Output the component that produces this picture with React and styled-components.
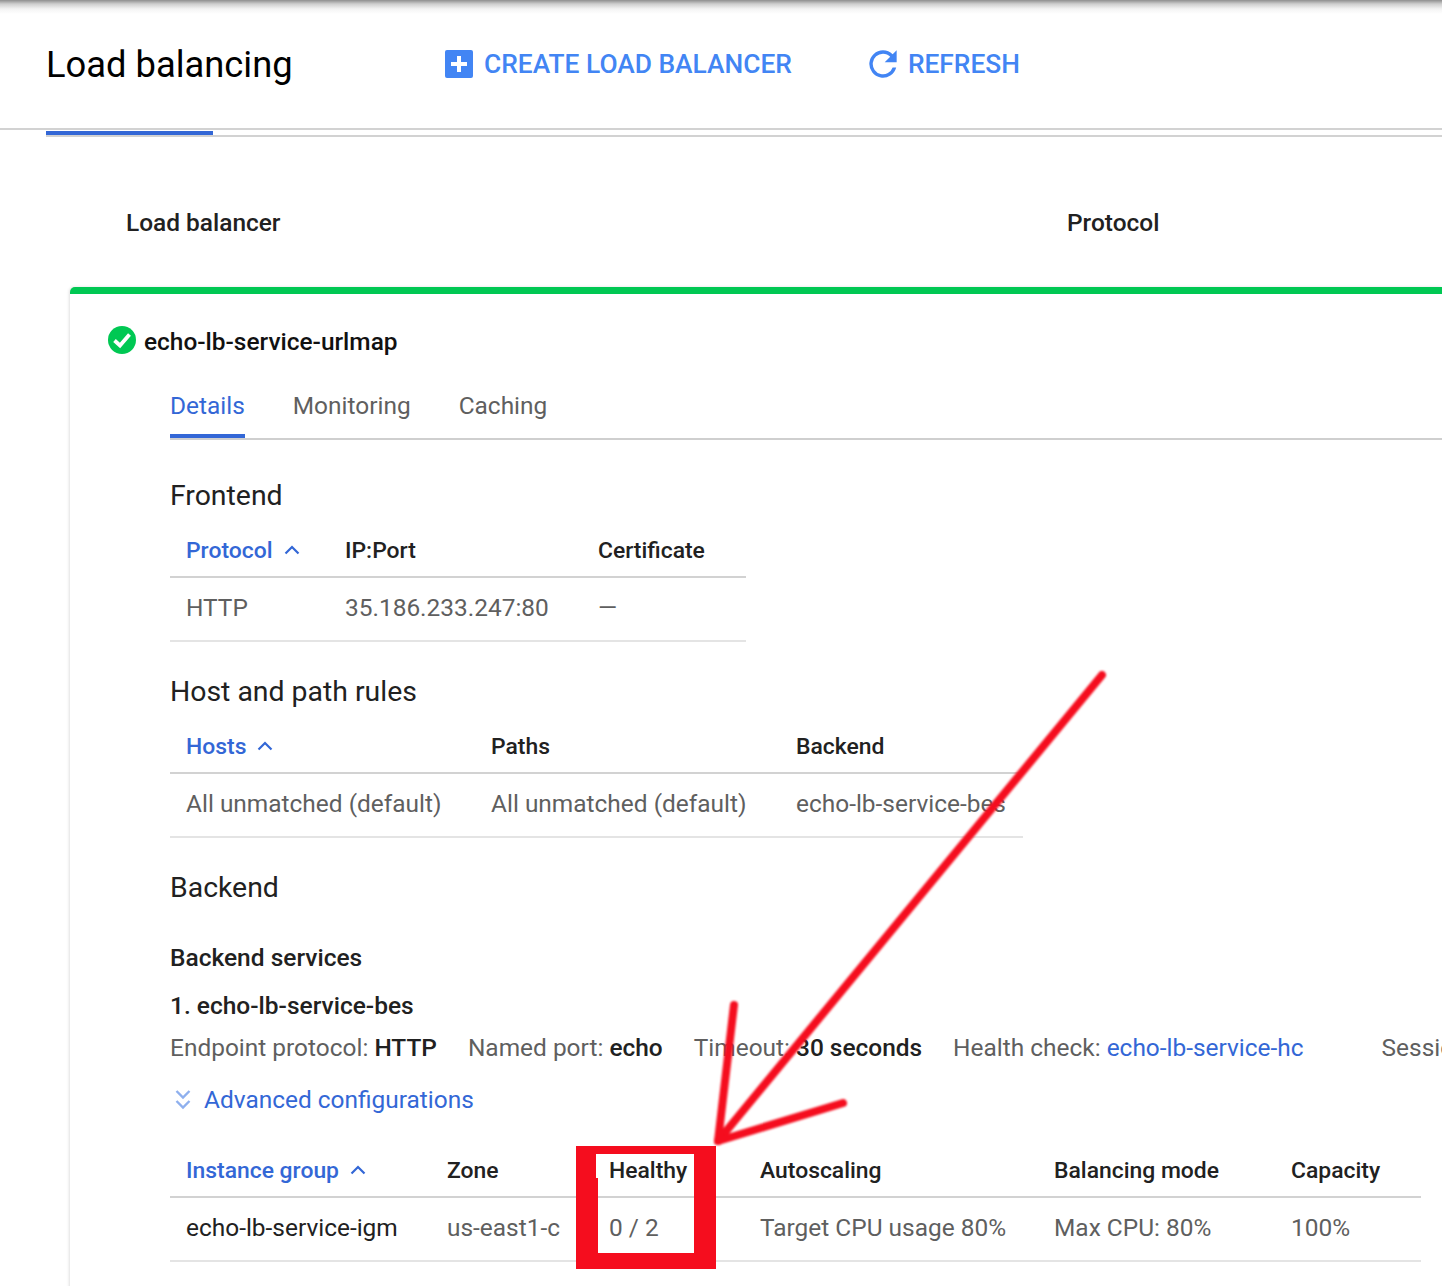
import styled, { createGlobalStyle } from "styled-components";

const GlobalStyle = createGlobalStyle`
  html, body {
    margin: 0;
    padding: 0;
    background: #fff;
    font-family: Roboto, "Liberation Sans", sans-serif;
  }
`;

const BLUE = "#3367d6";

const frontendCols = "159px 253px 1fr";
const hostsCols = "305px 305px 1fr";
const instanceCols = "261px 162px 151px 294px 237px 1fr";

const App = () => {
  return (
    <Page>
      <GlobalStyle />
      <TopShadow />
      <Header>
        <PageTitle>Load balancing</PageTitle>
        <Action $left="152px">
          <svg width="28" height="28" viewBox="0 0 28 28">
            <rect width="28" height="28" rx="2" fill="#4285f4" />
            <path d="M12 6h4v6h6v4h-6v6h-4v-6H6v-4h6z" fill="#fff" />
          </svg>
          CREATE LOAD BALANCER
        </Action>
        <Action $left="77px">
          <svg width="28" height="30" viewBox="3.800 3.700 16.400 16.600">
            <path
              d="M17.650 6.350A7.960 7.960 0 0 0 12 4a8 8 0 1 0 7.730 10h-2.080A6 6 0 1 1 12 6c1.660 0 3.140.690 4.220 1.780L13 11h7V4z"
              fill="#4285f4"
            />
          </svg>
          REFRESH
        </Action>
      </Header>
      <TabStrip>
        <ActiveStrip />
      </TabStrip>
      <ColumnHeads>
        <ColumnHead $width="941px">Load balancer</ColumnHead>
        <ColumnHead>Protocol</ColumnHead>
      </ColumnHeads>
      <Card>
        <CardTitle>
          <svg width="28" height="28" viewBox="0 0 28 28">
            <circle cx="14" cy="14" r="14" fill="#00c853" />
            <path d="M6.500 14.500l5.500 5 9.500-11" fill="none" stroke="#fff" strokeWidth="3.800" />
          </svg>
          <CardName>echo-lb-service-urlmap</CardName>
        </CardTitle>
        <Content>
          <Tabs>
            <Tab $active>Details</Tab>
            <Tab>Monitoring</Tab>
            <Tab>Caching</Tab>
          </Tabs>

          <SectionTitle $top="38px">Frontend</SectionTitle>
          <Table $width="576px">
            <HeadRow $cols={frontendCols}>
              <SortCell>
                Protocol <Chevron />
              </SortCell>
              <span>IP:Port</span>
              <span>Certificate</span>
            </HeadRow>
            <BodyRow $cols={frontendCols}>
              <span>HTTP</span>
              <span>35.186.233.247:80</span>
              <span>—</span>
            </BodyRow>
          </Table>

          <SectionTitle>Host and path rules</SectionTitle>
          <Table $width="853px">
            <HeadRow $cols={hostsCols}>
              <SortCell>
                Hosts <Chevron />
              </SortCell>
              <span>Paths</span>
              <span>Backend</span>
            </HeadRow>
            <BodyRow $cols={hostsCols}>
              <span>All unmatched (default)</span>
              <span>All unmatched (default)</span>
              <span>echo-lb-service-bes</span>
            </BodyRow>
          </Table>

          <SectionTitle>Backend</SectionTitle>
          <SubTitle $top="38px">Backend services</SubTitle>
          <SubTitle $top="20px">1. echo-lb-service-bes</SubTitle>
          <MetaRow>
            <span>
              Endpoint protocol: <strong>HTTP</strong>
            </span>
            <span>
              Named port: <strong>echo</strong>
            </span>
            <span>
              Timeout: <strong>30 seconds</strong>
            </span>
            <span>
              Health check: <MetaLink>echo-lb-service-hc</MetaLink>
            </span>
            <SessionCut>Session affinity</SessionCut>
          </MetaRow>
          <Advanced>
            <svg width="18" height="22" viewBox="0 0 18 22" fill="none" stroke="#8fb0ee" strokeWidth="2.400">
              <path d="M2.500 2l6.500 6.500L15.500 2" />
              <path d="M2.500 12l6.500 6.500 6.500-6.500" />
            </svg>
            Advanced configurations
          </Advanced>
          <Table $width="1251px" $top="30px">
            <HeadRow $cols={instanceCols}>
              <SortCell>
                Instance group <Chevron />
              </SortCell>
              <span>Zone</span>
              <span>Healthy</span>
              <span>Autoscaling</span>
              <span>Balancing mode</span>
              <span>Capacity</span>
            </HeadRow>
            <BodyRow $cols={instanceCols}>
              <DarkCell>echo-lb-service-igm</DarkCell>
              <span>us-east1-c</span>
              <span>0 / 2</span>
              <span>Target CPU usage 80%</span>
              <span>Max CPU: 80%</span>
              <span>100%</span>
            </BodyRow>
          </Table>
        </Content>
      </Card>

      <HealthyMark />
      <Notch />
      <Arrow viewBox="0 0 1442 1286">
        <g fill="none" stroke="#f50d1e" strokeWidth="8" strokeLinecap="round">
          <path d="M1102 675L718 1141" />
          <path d="M734 1005L718 1141" />
          <path d="M843 1103L718 1141" />
        </g>
      </Arrow>
    </Page>
  );
};

export default App;

const Chevron = () => (
  <svg width="16" height="10" viewBox="0 0 16 10" fill="none" stroke={BLUE} strokeWidth="2.200">
    <path d="M1.500 8.500L8 2l6.500 6.500" />
  </svg>
);

const Page = styled.div`
  position: relative;
  width: 1442px;
  height: 1286px;
  overflow: hidden;
  background: #fff;
`;

const TopShadow = styled.div`
  height: 14px;
  background: linear-gradient(#8f8f8f 0, #cfcfcf 4px, #f4f4f4 9px, #fff 14px);
`;

const Header = styled.div`
  display: flex;
  align-items: center;
  height: 114px;
  padding: 0 0 0 46px;
  border-bottom: 2px solid #d2d2d2;
  box-sizing: content-box;
`;

const PageTitle = styled.h1`
  margin: 0 0 14px;
  width: 247px;
  font-size: 36.350px;
  font-weight: 400;
  color: #000;
  white-space: nowrap;
`;

const Action = styled.div`
  display: flex;
  align-items: center;
  gap: 11px;
  margin-left: ${(p) => p.$left};
  margin-bottom: 15px;
  font-size: 26.350px;
  font-weight: 500;
  color: #4285f4;
  white-space: nowrap;
`;

const TabStrip = styled.div`
  height: 4px;
  margin: 1px 0 0 46px;
  border-bottom: 2px solid #d2d2d2;
`;

const ActiveStrip = styled.div`
  width: 167px;
  height: 4px;
  background: ${BLUE};
`;

const ColumnHeads = styled.div`
  display: flex;
  height: 150px;
  padding: 71px 0 0 126px;
  box-sizing: border-box;
  font-size: 24.450px;
  font-weight: 500;
  color: #212121;
`;

const ColumnHead = styled.div`
  width: ${(p) => p.$width || "auto"};
`;

const Card = styled.div`
  margin-left: 70px;
  min-height: 1000px;
  border-top: 7px solid #00c853;
  border-top-left-radius: 5px;
  box-shadow: -1px 0 3px rgba(0, 0, 0, 0.12);
  background: #fff;
`;

const CardTitle = styled.div`
  display: flex;
  align-items: center;
  gap: 8px;
  height: 28px;
  padding: 32px 0 0 38px;
  font-size: 24.450px;
  font-weight: 500;
  color: #111;
`;

const CardName = styled.span`
  padding-top: 2px;
`;

const Content = styled.div`
  padding-left: 100px;
`;

const Tabs = styled.div`
  display: flex;
  gap: 48px;
  height: 66px;
  margin-top: 20px;
  box-sizing: border-box;
  border-bottom: 2px solid #cfcfcf;
`;

const Tab = styled.div`
  height: 64px;
  padding-top: 18px;
  box-sizing: border-box;
  font-size: 24.450px;
  line-height: 28px;
  color: ${(p) => (p.$active ? BLUE : "#5f5f5f")};
  border-bottom: ${(p) => (p.$active ? `4px solid ${BLUE}` : "none")};
`;

const SectionTitle = styled.h2`
  margin: ${(p) => p.$top || "32px"} 0 0;
  font-size: 28.400px;
  line-height: 36px;
  font-weight: 400;
  color: #212121;
`;

const Table = styled.div`
  width: ${(p) => p.$width};
  margin-top: ${(p) => p.$top || "10px"};
`;

const Row = styled.div`
  display: grid;
  grid-template-columns: ${(p) => p.$cols};
  align-items: center;
  padding-left: 16px;
  white-space: nowrap;
`;

const HeadRow = styled(Row)`
  height: 52px;
  border-bottom: 2px solid #d2d2d2;
  box-sizing: content-box;
  font-size: 22.900px;
  font-weight: 500;
  color: #212121;
`;

const BodyRow = styled(Row)`
  height: 64px;
  padding-bottom: 4px;
  box-sizing: border-box;
  border-bottom: 2px solid #e4e4e4;
  font-size: 24.450px;
  color: #5f5f5f;
`;

const SortCell = styled.span`
  display: flex;
  align-items: center;
  gap: 11px;
  color: ${BLUE};
`;

const DarkCell = styled.span`
  color: #212121;
`;

const SubTitle = styled.div`
  margin-top: ${(p) => p.$top};
  font-size: 24.500px;
  line-height: 28px;
  font-weight: 500;
  color: #212121;
`;

const MetaRow = styled.div`
  display: flex;
  gap: 31px;
  margin-top: 14px;
  font-size: 24.450px;
  line-height: 28px;
  color: #5f5f5f;
  white-space: nowrap;

  strong {
    font-weight: 500;
    color: #212121;
  }
`;

const MetaLink = styled.span`
  color: ${BLUE};
`;

const SessionCut = styled.span`
  margin-left: 47px;
`;

const Advanced = styled.div`
  display: flex;
  align-items: center;
  gap: 12px;
  margin-top: 24px;
  padding-left: 4px;
  font-size: 24.450px;
  line-height: 28px;
  color: ${BLUE};
`;

const HealthyMark = styled.div`
  position: absolute;
  left: 576px;
  top: 1146px;
  width: 96px;
  height: 99px;
  border-style: solid;
  border-color: #f50d1e;
  border-width: 8px 22px 16px 22px;
`;

const Notch = styled.div`
  position: absolute;
  left: 596px;
  top: 1154px;
  width: 2px;
  height: 24px;
  background: #fff;
`;

const Arrow = styled.svg`
  position: absolute;
  left: 0;
  top: 0;
  width: 1442px;
  height: 1286px;
  filter: blur(0.8px);
  pointer-events: none;
`;
